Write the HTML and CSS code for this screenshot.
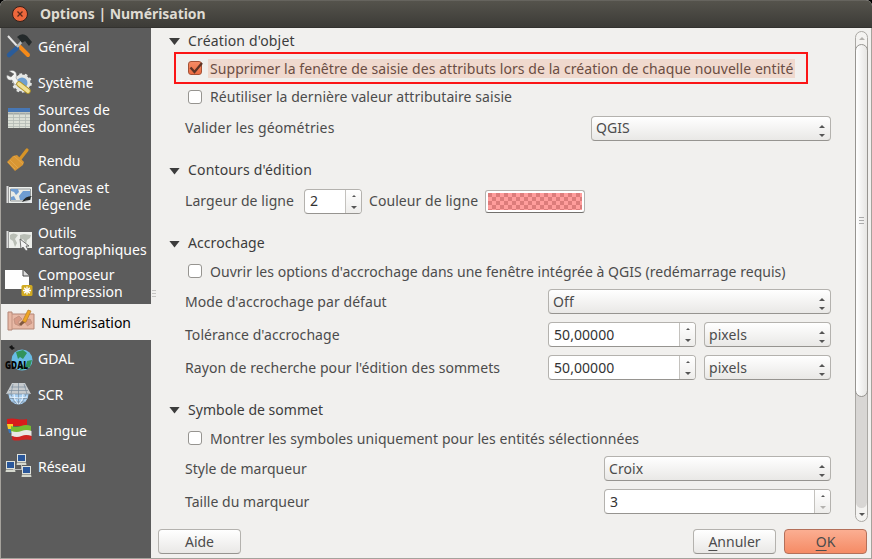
FILE: index.html
```html
<!DOCTYPE html>
<html lang="fr">
<head>
<meta charset="utf-8">
<title>Options | Numérisation</title>
<link rel="stylesheet" href="styles.css">
</head>
<body>
<div class="window">
  <header class="titlebar">
    <svg class="close" viewBox="0 0 16 16"><circle cx="8" cy="8" r="7.5" fill="#ee673c" stroke="#33211b"/><path d="M5.500 5.500l5 5M10.500 5.500l-5 5" stroke="#59291a" stroke-width="1.300"/></svg>
    <h1>Options | Numérisation</h1>
  </header>
  <div class="main">
    <nav class="sidebar">
      <a class="item"><svg class="icon" viewBox="0 0 28 28"><path d="M3 4l10 11" stroke="#e5e5e5" stroke-width="2"/><path d="M14 14l9 9" stroke="#f58a19" stroke-width="4" stroke-linecap="round"/><path d="M4 23L12 16" stroke="#2a5c9a" stroke-width="4.500" stroke-linecap="round"/><path d="M12 15l7-8" stroke="#b9bdbd" stroke-width="2.500"/><path d="M12 5q5-5 10-1l5 6-3 4-4-5-3 2-3-4z" fill="#242a2b"/></svg><span>Général</span></a>
      <a class="item"><svg class="icon" viewBox="0 0 28 28"><circle cx="17" cy="15" r="7" fill="#6e9fd0" stroke="#e4e6e4" stroke-width="3"/><circle cx="17" cy="15" r="8.800" fill="none" stroke="#e4e6e4" stroke-width="2" stroke-dasharray="2.800 2.700"/><path d="M4 3c5-2 9 1 7 7l3 4-4 3-3-5c-4 1-6-2-5-5l4 2 3-3z" fill="#f2f3f1" stroke="#777" stroke-width=".5"/><path d="M14 16l9 7" stroke="#b29528" stroke-width="5.500" stroke-linecap="round"/><path d="M14 16l9 7" stroke="#f0e092" stroke-width="3.700" stroke-linecap="round"/></svg><span>Système</span></a>
      <a class="item two gap7"><svg class="icon" viewBox="0 0 28 28"><path d="M3 4h22v20H3z" fill="#dce0d7"/><path d="M3 4h22v4H3z" fill="#4777b5"/><path d="M3 9.500h22" stroke="#a4aaa7" stroke-width="2"/><path d="M3 13.500h22M3 16.500h22M3 19.500h22M3 22.500h22M8.500 9v15M14.500 9v15M20.500 9v15" stroke="#b4bab5" stroke-width=".8"/></svg><span>Sources de<br>données</span></a>
      <a class="item"><svg class="icon" viewBox="0 0 28 28"><path d="M15 13l7-9" stroke="#d69427" stroke-width="3.200" stroke-linecap="round"/><path d="M8 10l4-1 7 7-1 3-8 6-8-9z" fill="#d89633"/><path d="M9 10l9 8M5 14l8 8M3 16l7 7" stroke="#e5ac55" stroke-width=".7"/></svg><span>Rendu</span></a>
      <a class="item two gap10"><svg class="icon" viewBox="0 0 28 28"><path d="M2.500 4v17" stroke="#ddd" stroke-width="2"/><path d="M4 5h23v16H4z" fill="#edf0ed"/><path d="M5.500 7h20v12h-20z" fill="#e9ebe6" stroke="#6d7478" stroke-width=".7"/><path d="M6 7h7l1 3-3 3-2-3-3-1zM14 14l4-5h7v6l-4 3h-6zM6 15l3-1 2 4H6z" fill="#6f9dd2"/><path d="M17 20q3-6 10-6-2 1-2 4-4 0-8 2z" fill="#242727"/><path d="M19 21l8-4v4z" fill="#e4e7e8"/></svg><span>Canevas et<br>légende</span></a>
      <a class="item two gap7"><svg class="icon" viewBox="0 0 28 28"><path d="M2.500 4v17" stroke="#ddd" stroke-width="2"/><path d="M4 5h23v16H4z" fill="#eceeea"/><path d="M5 8q3-3 8 0l-3 4 2 4-2 4-2-6-3-2zM15 8l4-1 7 1-1 3-3 2-1 4-3-5-3 2z" fill="#b9beb5"/><path d="M15 12l1 10 2-2 3 4 2-1-2-4h3z" fill="#f3f3f3" stroke="#555" stroke-width=".8"/></svg><span>Outils<br>cartographiques</span></a>
      <a class="item two gap4"><svg class="icon" viewBox="0 0 28 28"><path d="M0 1h18l6 6v13H0z" fill="#fefefe"/><path d="M18 1v6h6" fill="#ddd" stroke="#444"/><rect x="16.500" y="16" width="11" height="11" rx="1.500" fill="#d1aa20"/><path d="M22 17.500v8M18 21.500h8M19.200 18.700l5.600 5.600M24.800 18.700l-5.600 5.600" stroke="#fff" stroke-width="1.300"/></svg><span>Composeur<br>d'impression</span></a>
      <a class="item selected"><svg class="icon" viewBox="0 0 28 28"><path d="M1 4h4v2h22v15H5v1H1z" fill="#e8b9a6" stroke="#b38676"/><path d="M5 6v15M7 11l5-3 3 3-4 3 2 4-5-2zM16 13l7-2 2 4-5 3" fill="#d79b87" stroke="#c49482"/><path d="M14 16l2-4 5-10 3 1-5 11z" fill="#efa523" stroke="#b17a2b" stroke-width=".7"/><path d="M12 16l3-3 3 1-4 4z" fill="#805840"/></svg><span>Numérisation</span></a>
      <a class="item"><svg class="icon" viewBox="0 0 28 28"><circle cx="17" cy="16" r="10.500" fill="#68bce5"/><path d="M11 8l7-2 4 3-4 6-3-2-2 2zM22 17l5-1-2 7-5 2zM17 20l3 5-5 1z" fill="#31935b"/><path d="M4 3l3-2 1 2 2 1-3 2-2-2z" fill="#151515"/><text x="0" y="24.500" class="gdal" textLength="23" lengthAdjust="spacingAndGlyphs">GDAL</text></svg><span>GDAL</span></a>
      <a class="item"><svg class="icon" viewBox="0 0 28 28"><circle cx="13.500" cy="14.500" r="10" fill="#a8d0f3"/><path d="M7 3h13l6 11H1z" fill="#c7cbce"/><path d="M6 7h15M4 10.500h19M2 14h23M8 4L6 14M13.500 3v21M19 4l3 10M5 18.500h17M7 22h13M6 14q2 8 7 10M21 14q-2 8-7 10" fill="none" stroke="#788b9c" stroke-width=".7"/><path d="M5 17q9 2 17 0M9 14q0 7 4 10M18 14q0 7-4 10" fill="none" stroke="#e8f4ff"/></svg><span>SCR</span></a>
      <a class="item"><svg class="icon" viewBox="0 0 28 28"><path d="M2 3q5-1 10 0t10 0v7H2z" fill="#d81b1b"/><path d="M2 8h6v5H3z" fill="#f8cc27"/><path d="M3 13h4v4H4z" fill="#3974bb"/><path d="M6 10q5 2 10 0t10 0v6q-5-1-10 1t-10-1z" fill="#75b930"/><path d="M6.500 15q5 2 10 0t10 0v5q-5-1-10 1t-10-1z" fill="#e8e8e4"/><path d="M7 20q5 2 9.500 0t10 0v4q-5-1-10 0t-9 0z" fill="#cf2421"/></svg><span>Langue</span></a>
      <a class="item"><svg class="icon" viewBox="0 0 28 28"><path d="M8 17.500h12M16.500 12v5" stroke="#bbb"/><g id="pc"><path d="M12 2h9v8h-9z" fill="#dfe2db"/><path d="M13 3h7v6h-7z" fill="#2a579b"/><path d="M12 10.500h9l.5 2.500h-10z" fill="#d5d8ce"/></g><use href="#pc" x="-11" y="7"/><use href="#pc" x="5" y="12"/></svg><span>Réseau</span></a>
    </nav>
    <div class="splitter"><i></i><i></i><i></i></div>
    <section class="content">
      <div class="scrollarea">
        <form class="form">
          <h2 class="first"><i class="tri"></i><span class="wide">Création d'objet</span></h2>
          <div class="check marked"><i class="box on"><svg viewBox="0 0 17 16"><path d="M3.500 7.500l4 4.500L15 3" fill="none" stroke="#5e3426" stroke-width="2.300"/></svg></i><span>Supprimer la fenêtre de saisie des attributs lors de la création de chaque nouvelle entité</span></div>
          <div class="check raised"><i class="box"></i><span>Réutiliser la dernière valeur attributaire saisie</span></div>
          <div class="row tall"><label class="wide">Valider les géométries</label><div class="combo w240"><span>QGIS</span><i class="arrows"></i></div></div>
          <h2 class="next raised"><i class="tri"></i><span class="wide">Contours d'édition</span></h2>
          <div class="row tall line"><label class="l2">Largeur de ligne</label><div class="spin w58"><span>2</span><i class="arrows"></i></div><label class="l3">Couleur de ligne</label><div class="color"><i></i></div></div>
          <h2 class="next raised"><i class="tri"></i><span>Accrochage</span></h2>
          <div class="check tight"><i class="box"></i><span>Ouvrir les options d'accrochage dans une fenêtre intégrée à QGIS (redémarrage requis)</span></div>
          <div class="row"><label>Mode d'accrochage par défaut</label><div class="combo w283"><span>Off</span><i class="arrows"></i></div></div>
          <div class="row"><label>Tolérance d'accrochage</label><div class="spin w148"><span>50,00000</span><i class="arrows"></i></div><div class="combo w127"><span>pixels</span><i class="arrows"></i></div></div>
          <div class="row"><label>Rayon de recherche pour l'édition des sommets</label><div class="spin w148"><span>50,00000</span><i class="arrows"></i></div><div class="combo w127"><span>pixels</span><i class="arrows"></i></div></div>
          <h2 class="next"><i class="tri"></i><span class="tight">Symbole de sommet</span></h2>
          <div class="check last"><i class="box"></i><span>Montrer les symboles uniquement pour les entités sélectionnées</span></div>
          <div class="row"><label class="tight">Style de marqueur</label><div class="combo w227"><span>Croix</span><i class="arrows"></i></div></div>
          <div class="row"><label class="tight">Taille du marqueur</label><div class="spin w227 atmin"><span>3</span><i class="arrows"></i></div></div>
        </form>
        <div class="scrollbar"><i class="up"></i><div class="thumb"><b></b><b></b><b></b></div><div class="trough"></div><i class="down"></i></div>
      </div>
      <footer class="buttons"><button class="help">Aide</button><button><u>A</u>nnuler</button><button class="ok"><u>O</u>K</button></footer>
    </section>
  </div>
</div>
</body>
</html>
```
FILE: styles.css
```css
* { box-sizing: border-box; }
body { margin: 0; background: #000; font: 14px/17px "Noto Sans", "Open Sans", sans-serif; color: #4c4c4c; }
i { font-style: normal; }
.window { width: 872px; height: 559px; display: flex; flex-direction: column; background: #f1f0ee; border-radius: 6px 6px 0 0; overflow: hidden; }
.titlebar { height: 28px; flex: none; display: flex; align-items: center; gap: 12px; padding: 0 0 1px 12px; background: linear-gradient(#55534c, #3c3b37); border-top: 1px solid #66645e; border-bottom: 1px solid #33322f; }
.close { width: 16px; height: 16px; }
.titlebar h1 { margin: 0; font-size: 14px; font-weight: 700; color: #dfdbd2; letter-spacing: -0.04px; }
.main { flex: 1; display: flex; min-height: 0; border: 1px solid #a5a29c; border-top: 0; }
.sidebar { width: 150px; flex: none; background: #5c5c5c; color: #fff; }
.item { display: flex; align-items: center; height: 36px; padding-left: 4px; gap: 5px; white-space: nowrap; }
.icon { width: 28px; height: 28px; flex: none; overflow: visible; }
.two { height: 35px; }
.gap7 { margin-bottom: 7px; }
.gap10 { margin-bottom: 10px; }
.gap4 { margin-bottom: 4px; }
.selected { background: #f1f0ee; color: #000; padding-left: 6px; gap: 6px; }
.gdal { font: 800 10.5px "Open Sans", sans-serif; fill: #050505; }
.splitter { width: 5px; flex: none; display: flex; flex-direction: column; justify-content: center; gap: 2px; }
.splitter i { height: 1px; background: #c5c4c2; margin-left: 1px; }
.content { flex: 1; display: flex; flex-direction: column; min-width: 0; }
.scrollarea { display: flex; height: 497px; }
.form { width: 675px; padding-left: 13px; letter-spacing: 0.065px; }
h2 { margin: 0; height: 28px; display: flex; align-items: center; gap: 8px; font-size: 14px; font-weight: 400; color: #3c3c3c; }
.first { height: 27px; padding-bottom: 2px; }
.next { margin-top: 11px; }
.wide { letter-spacing: 0.16px; }
.tight { letter-spacing: 0.03px; }
.tri { width: 11px; height: 7px; margin-top: 2px; background: #3c3c3c; clip-path: polygon(0 0, 100% 0, 50% 100%); }
.check { height: 28px; display: flex; align-items: center; margin-left: 19px; white-space: nowrap; gap: 6px; }
.check span { padding: 1px 2px; }
.raised span { margin-bottom: 2px; }
.last { height: 29px; padding-top: 1px; }
.box { width: 14px; height: 14px; flex: none; border: 1px solid #969490; border-radius: 3px; background: #fff; }
.on { background: linear-gradient(#f58b65, #ec6c42); border-color: #a55236; }
.on svg { display: block; width: 17px; height: 16px; margin: -2px 0 0 -2px; overflow: visible; }
.marked { width: 634px; height: 32px; margin: -3px 0 -1px 5px; padding: 0 0 0 12px; border: 2px solid #fb1516; }
.marked span { background: #f0d9ce; color: #6a4d43; }
.row { height: 33px; display: flex; align-items: center; padding: 0 0 0 16px; white-space: nowrap; gap: 8px; }
.tall { height: 34px; }
.tall label { margin-bottom: 2px; }
.tall span { margin-bottom: 1px; }
label { margin-right: auto; }
.line label { margin-right: 0; }
.line .l2 { width: 111px; }
.line .l3 { width: 108px; margin-left: -1px; }
.combo, .spin, button { height: 25px; border: 1px solid #b4b2ae; border-bottom-color: #969490; border-radius: 4px; background: linear-gradient(#fff, #e9e8e6); }
.combo, .spin { display: flex; align-items: center; justify-content: space-between; padding-left: 4px; flex: none; }
.spin { background: #fff; padding-left: 5px; color: #333; }
.arrows { width: 17px; height: 23px; display: flex; flex-direction: column; justify-content: flex-end; align-items: center; gap: 6px; padding-bottom: 3px; }
.arrows::before, .arrows::after { content: ""; border: 3px solid transparent; }
.arrows::before { border-top: 0; border-bottom-color: #555; }
.arrows::after { border-bottom: 0; border-top-color: #555; }
.spin .arrows { width: 16px; border-left: 1px solid #c4c2be; background: linear-gradient(#fff, #eeedeb); border-radius: 0 3px 3px 0; gap: 9px; padding-bottom: 4px; }
.spin .arrows::before { border-width: 0 2.5px 2px; }
.atmin .arrows::after { border-top-color: #b4b2af; }
.w240 { width: 240px; }
.w283 { width: 283px; }
.w227 { width: 227px; }
.w148 { width: 148px; }
.w127 { width: 127px; }
.w58 { width: 58px; }
.color { width: 100px; height: 23px; padding: 2px; border: 1px solid #b4b2ae; border-bottom-color: #72706c; border-radius: 3px; background: #fff; }
.color i { display: block; height: 17px; background: conic-gradient(#ff9d9c 25%, #dc7c7b 0 50%, #ff9d9c 0 75%, #dc7c7b 0) 0 0 / 8px 8px; }
.scrollbar { width: 13px; height: 491px; margin: 3px 0 0 24px; display: flex; flex-direction: column; border: 1px solid #aaa8a4; border-radius: 7px; background: #f4f3f1; }
.up, .down { height: 13px; display: flex; align-items: center; justify-content: center; }
.up { height: 12px; }
.up::before, .down::before { content: ""; border: 3px solid transparent; }
.up::before { border-top: 0; border-bottom-color: #b5b3af; }
.down::before { border-bottom: 0; border-top-color: #555; }
.thumb { position: relative; z-index: 1; height: 353px; margin: 0 -1px; border: 1px solid #969490; border-radius: 7px; background: linear-gradient(90deg, #fff, #e6e5e3); display: flex; flex-direction: column; justify-content: center; align-items: center; gap: 2px; }
.thumb b { width: 5px; height: 1px; background: #aaa; }
.trough { flex: 1; background: #d8d6d4; border-radius: 0 0 6px 6px; margin-top: -6px; }
.buttons { display: flex; padding: 4px 4px 0 2px; gap: 8px; }
button { width: 83px; padding: 0; font: inherit; color: #4c4c4c; }
.help { margin-right: auto; }
u { text-underline-offset: 3px; }
.ok { background: linear-gradient(#fbae92, #f58b65); border-color: #b4705a; }
```
